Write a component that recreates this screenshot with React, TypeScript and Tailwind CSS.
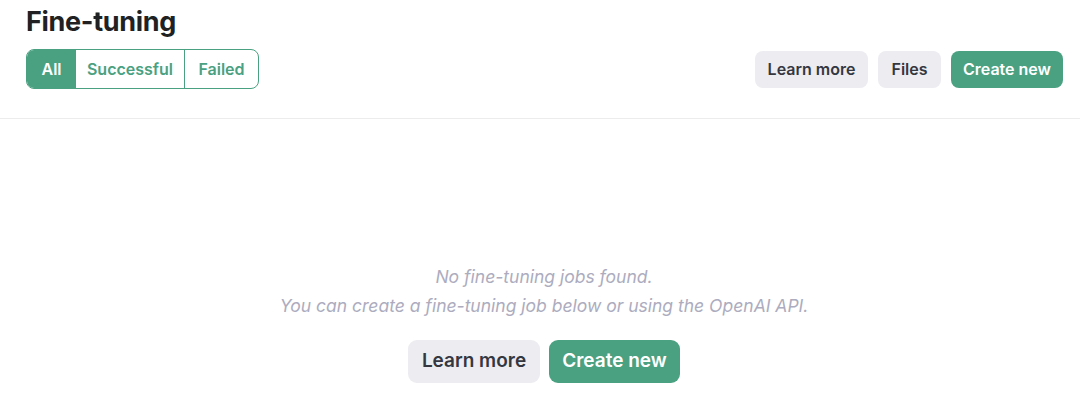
import React from 'react';

const font = { fontFamily: 'Inter, "Liberation Sans", sans-serif' };

const App: React.FC = () => {
  return (
    <main className="w-[1080px] h-[413px] bg-white text-[#202123] overflow-hidden" style={font}>
      {/* Header */}
      <header className="h-[119px] border-b border-[#ececec] pl-[26px] pr-[17px] pt-[4px]">
        <h1 className="text-[27px] leading-[36px] font-bold tracking-[-0.3px]">Fine-tuning</h1>
        <div className="mt-[9px] flex items-center justify-between">
          {/* Filter tabs */}
          <div className="flex h-[40px] rounded-[8px] border border-[#4aa181] overflow-hidden text-[16px] font-semibold">
            <button className="w-[49px] bg-[#4aa181] text-white">All</button>
            <button className="w-[109px] text-[#4aa181] border-r border-[#4aa181]">Successful</button>
            <button className="w-[73px] text-[#4aa181]">Failed</button>
          </div>
          <div className="flex items-center gap-[10px] text-[16px] font-semibold">
            <button className="h-[37px] w-[113px] rounded-[8px] bg-[#ececf1] text-[#353740]">Learn more</button>
            <button className="h-[37px] w-[63px] rounded-[8px] bg-[#ececf1] text-[#353740]">Files</button>
            <button className="h-[37px] w-[112px] rounded-[8px] bg-[#4aa181] text-white">Create new</button>
          </div>
        </div>
      </header>

      {/* Empty state */}
      <section className="flex flex-col items-center pt-[143px] pl-[8px]">
        <p className="text-[17.5px] leading-[29px] italic text-[#acacbe] text-center">
          No fine-tuning jobs found.
          <br />
          You can create a fine-tuning job below or using the OpenAI API.
        </p>
        <div className="mt-[20px] flex gap-[9px] text-[19px] font-semibold">
          <button className="h-[43px] w-[132px] rounded-[9px] bg-[#ececf1] text-[#353740]">Learn more</button>
          <button className="h-[43px] w-[131px] rounded-[9px] bg-[#4aa181] text-white">Create new</button>
        </div>
      </section>
    </main>
  );
};

export default App;
